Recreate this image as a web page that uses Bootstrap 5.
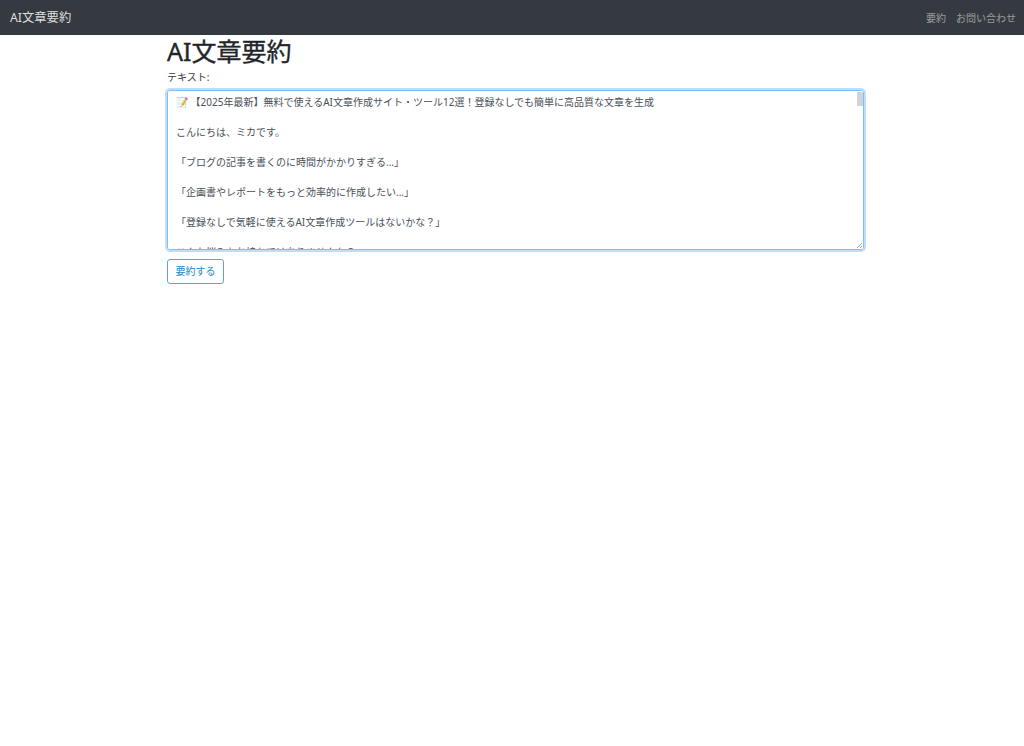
<!DOCTYPE html>
<html lang="ja">
<head>
<meta charset="utf-8">
<link href="https://cdn.jsdelivr.net/npm/bootstrap@5.3.0/dist/css/bootstrap.min.css" rel="stylesheet">
<style>
body{font-family:"Noto Sans","Noto Sans CJK JP",sans-serif;font-size:10px;color:#212529;background:#fff}
.topbar{background:#343a40;height:35px;padding:1px 8px 0 10px}
.brandtxt{color:rgba(255,255,255,.85);font-size:12.3px;text-decoration:none}
.toplink{color:rgba(255,255,255,.5);font-size:10px;text-decoration:none}
.linkrow{gap:10px}
.wrapbox{width:697px;margin-left:167px}
.pagehead{font-size:25px;font-weight:400;-webkit-text-stroke:.35px #212529;line-height:30px;margin:0;padding-top:1px}
.fieldlabel{font-size:10px;line-height:15px;margin:4px 0 5px;color:#343a40}
.areabox{height:160px}
.summtext.form-control{width:100%;height:160px;font-size:10px;line-height:15px;padding:4px 8px;color:#495057;border:1px solid #80bdff;border-radius:3px;box-shadow:0 0 0 2px rgba(0,123,255,.25);resize:none;display:block;min-height:0}
.thumbmark{position:absolute;top:2px;right:1px;width:6px;height:14px;background:#d0d4d8;border-radius:1px}
.gripmark{position:absolute;right:2px;bottom:2px;width:5px;height:5px}
.sendbtn{font-size:10px;line-height:15px;padding:4px 7.5px;margin-top:9px;color:#1a8ac4;border:1px solid #55a8d8;border-radius:3px;background:#fff}
</style>
</head>
<body>
<nav class="topbar d-flex align-items-center justify-content-between">
<a class="brandtxt" href="#">AI文章要約</a>
<div class="d-flex linkrow"><a class="toplink" href="#">要約</a><a class="toplink" href="#">お問い合わせ</a></div>
</nav>
<main class="wrapbox">
<h1 class="pagehead">AI文章要約</h1>
<div class="fieldlabel">テキスト:</div>
<div class="areabox position-relative">
<textarea class="summtext form-control" readonly>📝 【2025年最新】無料で使えるAI文章作成サイト・ツール12選！登録なしでも簡単に高品質な文章を生成

こんにちは、ミカです。

「ブログの記事を書くのに時間がかかりすぎる...」

「企画書やレポートをもっと効率的に作成したい...」

「登録なしで気軽に使えるAI文章作成ツールはないかな？」

こんな悩みをお持ちではありませんか？

今回は、無料で使えるAI文章作成サイトをご紹介します。</textarea>
<span class="thumbmark"></span>
<svg class="gripmark" viewBox="0 0 5 5" aria-hidden="true"><path d="M0 5 5 0M3 5 5 3" stroke="#8a8f94" stroke-width=".8" fill="none"/></svg>
</div>
<button class="sendbtn" type="button">要約する</button>
</main>
<script src="https://cdn.jsdelivr.net/npm/bootstrap@5.3.0/dist/js/bootstrap.bundle.min.js"></script>
</body>
</html>
